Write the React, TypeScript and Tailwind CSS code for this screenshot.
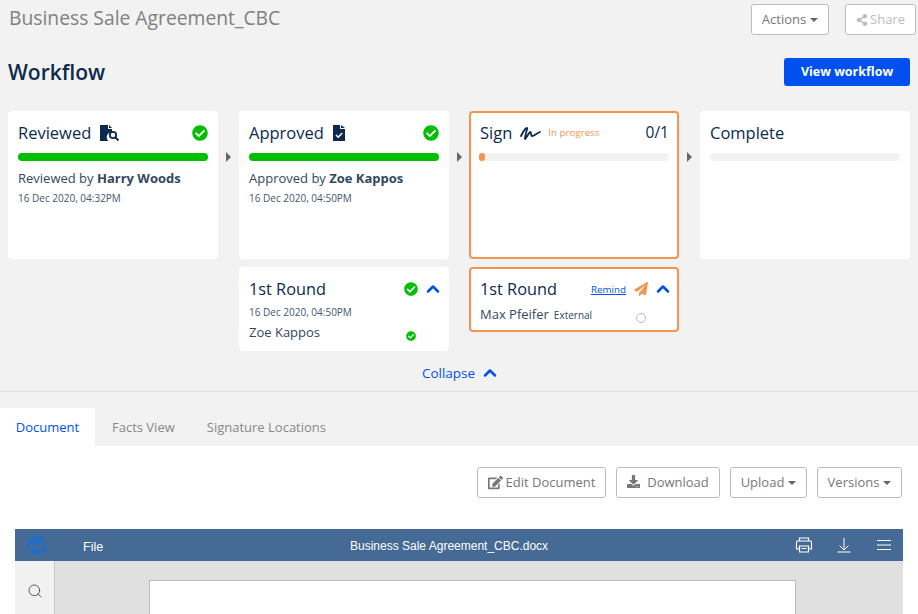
import { ChevronUp, Search } from "lucide-react";
import { FaCheckCircle, FaShareAlt, FaPaperPlane, FaEdit, FaDownload } from "react-icons/fa";

const Caret = () => <span className="inline-block ml-1 align-middle w-0 h-0 border-x-[4px] border-x-transparent border-t-[4px] border-t-[#666]" />;

const Arrow = () => (
  <div className="flex justify-center pt-[41px]">
    <span className="w-0 h-0 border-y-[5px] border-y-transparent border-l-[5px] border-l-[#666]" />
  </div>
);

const Check = ({ size = 16 }: { size?: number }) => <FaCheckCircle size={size} className="text-[#00bf00]" />;

const Bar = ({ full, dot }: { full?: boolean; dot?: boolean }) => (
  <div className="h-2 rounded-full bg-[#f2f2f2] mt-[8px]">
    {full && <div className="h-2 rounded-full bg-[#00bf00]" />}
    {dot && <div className="h-2 w-[6px] rounded-full bg-[#f39450]" />}
  </div>
);

const ReviewIcon = () => (
  <svg width="20" height="16" viewBox="0 0 20 16" className="ml-[9px]">
    <path d="M0 0h8v4h4v3.2a5 5 0 0 0-3.500 8.800H0z" fill="#0d2a4d" />
    <path d="M9 0l3 3H9z" fill="#0d2a4d" />
    <circle cx="13" cy="10" r="3.200" fill="none" stroke="#0d2a4d" strokeWidth="1.800" />
    <path d="M15.500 12.500l3 3" stroke="#0d2a4d" strokeWidth="2" />
  </svg>
);

const ApprovedIcon = () => (
  <svg width="12" height="16" viewBox="0 0 12 16" className="ml-[9px]">
    <path d="M0 0h7v4h5v12H0z" fill="#0d2a4d" />
    <path d="M8 0l4 3H8z" fill="#0d2a4d" />
    <path d="M3 10l2.200 2.200L9.200 8" fill="none" stroke="#fff" strokeWidth="1.600" />
  </svg>
);

const SignIcon = () => (
  <svg width="21" height="13" viewBox="0 0 21 13" className="ml-[8px]">
    <path d="M1 9C3 5 5 1 7 1 8 1 4 11 5 12 6 12 9 5 10.500 5 11.500 5 10.500 9 12 9 14 9 17 6 20 5" fill="none" stroke="#0d2a4d" strokeWidth="1.800" strokeLinecap="round" />
  </svg>
);

const Logo = () => (
  <svg width="20" height="20" viewBox="0 0 20 20" className="ml-[12px]">
    <circle cx="10" cy="10" r="8.500" fill="none" stroke="#1a6fd0" strokeWidth="1.500" />
    <path d="M4 9a6 6 0 0 1 10-4l-3 1M16 11a6 6 0 0 1-10 4l3-1M7 11a3 3 0 0 1 6-2" fill="none" stroke="#1a6fd0" strokeWidth="2" />
  </svg>
);

const OutlineBtn = ({ children, className = "" }: { children: React.ReactNode; className?: string }) => (
  <button className={`h-[31px] border border-[#bdbdbd] rounded-[3px] text-[13px] text-[#777] flex items-center justify-center ${className}`}>{children}</button>
);

export default function App() {
  return (
    <div className="w-[918px] h-[614px] overflow-hidden bg-[#f2f2f2] font-['Open_Sans',sans-serif] text-[#0d2a4d]">
      <div className="flex items-start h-[58px] pt-[4px] pl-[9px] pr-[2px]">
        <h1 className="text-[19.300px] leading-[30px] text-[#808080] -mt-[1px]">Business Sale Agreement_CBC</h1>
        <OutlineBtn className="ml-auto w-[78px] bg-white">Actions <Caret /></OutlineBtn>
        <OutlineBtn className="ml-[16px] w-[71px] bg-white text-[#bdbdbd]"><FaShareAlt size={12} className="mr-[2px]" />Share</OutlineBtn>
      </div>
      <div className="flex items-center justify-between h-[28px] pl-[8px] pr-[8px]">
        <h2 className="text-[21px] font-semibold mt-[2px]">Workflow</h2>
        <button className="w-[126px] h-[28px] pt-[1px] rounded-[3px] bg-[#0050f0] text-white text-[12.500px] font-bold">View workflow</button>
      </div>

      <div className="grid grid-cols-[210px_21px_210px_20px_210px_21px_210px] pl-[8px] mt-[25px]">
        <div className="h-[148px] bg-white rounded-[4px] px-[10px] pt-[10px]">
          <div className="flex items-center h-[24px]">
            <span className="text-[16.500px]">Reviewed</span><ReviewIcon />
            <span className="ml-auto"><Check /></span>
          </div>
          <Bar full />
          <p className="text-[13px] leading-[18px] mt-[8px] text-[#33475f]">Reviewed by <b className="font-bold">Harry Woods</b></p>
          <p className="text-[10px] leading-[14px] mt-[4px] text-[#44566c]">16 Dec 2020, 04:32PM</p>
        </div>
        <Arrow />
        <div className="h-[148px] bg-white rounded-[4px] px-[10px] pt-[10px]">
          <div className="flex items-center h-[24px]">
            <span className="text-[16.500px]">Approved</span><ApprovedIcon />
            <span className="ml-auto"><Check /></span>
          </div>
          <Bar full />
          <p className="text-[13px] leading-[18px] mt-[8px] text-[#33475f]">Approved by <b className="font-bold">Zoe Kappos</b></p>
          <p className="text-[10px] leading-[14px] mt-[4px] text-[#44566c]">16 Dec 2020, 04:50PM</p>
        </div>
        <Arrow />
        <div className="h-[148px] bg-white rounded-[4px] border-2 border-[#f39450] px-[8px] pt-[8px]">
          <div className="flex items-center h-[24px]">
            <span className="text-[16.500px] ml-[1px]">Sign</span><SignIcon />
            <span className="ml-[7px] text-[9.800px] text-[#f39450]">In progress</span>
            <span className="ml-auto text-[15.500px]">0/1</span>
          </div>
          <Bar dot />
        </div>
        <Arrow />
        <div className="h-[148px] bg-white rounded-[4px] px-[10px] pt-[10px]">
          <div className="flex items-center h-[24px]"><span className="text-[16.500px]">Complete</span></div>
          <Bar />
        </div>

        <div className="col-start-3 mt-[8px] h-[84px] bg-white rounded-[4px] px-[10px] pt-[10px]">
          <div className="flex items-center h-[24px]">
            <span className="text-[16.300px]">1st Round</span>
            <span className="ml-auto"><Check size={14} /></span>
            <ChevronUp size={20} strokeWidth={3} className="ml-[5px] -mr-[4px] text-[#0050f0]" />
          </div>
          <p className="text-[10px] leading-[14px] mt-[4px] text-[#44566c]">16 Dec 2020, 04:50PM</p>
          <div className="relative text-[13px] leading-[18px] mt-[4px] text-[#33475f]">
            Zoe Kappos
            <span className="absolute left-[157px] top-[8px]"><Check size={10} /></span>
          </div>
        </div>
        <div className="col-start-5 mt-[8px] h-[65px] self-start bg-white rounded-[4px] border-2 border-[#f39450] px-[8px] pt-[8px]">
          <div className="flex items-center h-[24px]">
            <span className="text-[16.300px] ml-[1px]">1st Round</span>
            <a className="ml-auto text-[9.800px] text-[#0050f0] underline mt-[2px]">Remind</a>
            <FaPaperPlane size={14} className="ml-[8px] text-[#f39450]" />
            <ChevronUp size={20} strokeWidth={3} className="ml-[5px] -mr-[4px] text-[#0050f0]" />
          </div>
          <div className="relative flex items-baseline text-[13px] leading-[18px] text-[#33475f] mt-[4px] ml-[1px]">
            Max Pfeifer<span className="ml-[5px] text-[10px]">External</span>
            <span className="absolute left-[156px] top-[8px] w-[10px] h-[10px] rounded-full border border-[#bbb]" />
          </div>
        </div>
      </div>

      <div className="flex items-center justify-center h-[41px] pt-[4px] pl-[4px] border-b border-[#e2e2e2] text-[13.500px] text-[#0050f0]">
        Collapse<ChevronUp size={20} strokeWidth={3} className="ml-[5px]" />
      </div>

      <div className="flex h-[38px] mt-[16px] text-[13px] text-[#888] leading-[38px]">
        <div className="w-[95px] bg-white text-center text-[#0050f0]">Document</div>
        <div className="ml-[17px]">Facts View</div>
        <div className="ml-[32px]">Signature Locations</div>
      </div>

      <div className="bg-white h-[168px] pt-[21px] px-[15px]">
        <div className="flex justify-end gap-[10px] pr-[1px]">
          <OutlineBtn className="w-[129px]"><FaEdit size={15} className="mr-[3px]" />Edit Document</OutlineBtn>
          <OutlineBtn className="w-[104px]"><FaDownload size={13} className="mr-[7px] -mt-[3px]" />Download</OutlineBtn>
          <OutlineBtn className="w-[77px]">Upload <Caret /></OutlineBtn>
          <OutlineBtn className="w-[85px]">Versions <Caret /></OutlineBtn>
        </div>
        <div className="mt-[31px] w-[888px] font-['Liberation_Sans',sans-serif]">
          <div className="relative flex items-center h-[32px] bg-[#446a95] text-white text-[12px]">
            <Logo />
            <span className="ml-[36px] mt-[4px] text-[12.500px]">File</span>
            <span className="absolute left-[335px] top-[8px]">Business Sale Agreement_CBC.docx</span>
            <svg width="18" height="16" viewBox="0 0 18 16" className="ml-auto" fill="none" stroke="#fff" strokeWidth="1.200">
              <path d="M4.500 4V1h9v3M4 12H1.500V5q0-1 1-1h13q1 0 1 1v7H14M4.500 9h9v6h-9zM6.500 11.500h5" />
            </svg>
            <svg width="16" height="16" viewBox="0 0 16 16" className="ml-[23px]" fill="none" stroke="#fff" strokeWidth="1">
              <path d="M8 1v12M3.500 8.500L8 13l4.500-4.500M1.500 15h13" />
            </svg>
            <svg width="14" height="10" viewBox="0 0 14 10" className="ml-[25px] mr-[12px]" stroke="#fff" strokeWidth="1">
              <path d="M0 .5h14M0 5h14M0 9.500h14" />
            </svg>
          </div>
          <div className="flex h-[53px] bg-[#e0e0e0]">
            <div className="w-[40px] bg-[#f1f1f1] border-r border-[#c4c8cc] flex justify-center pt-[22px]">
              <Search size={16} strokeWidth={1.300} className="text-[#33475f]" />
            </div>
            <div className="ml-[94px] mt-[19px] w-[647px] h-[60px] bg-white border border-[#bcbcbc]" />
          </div>
        </div>
      </div>
    </div>
  );
}
